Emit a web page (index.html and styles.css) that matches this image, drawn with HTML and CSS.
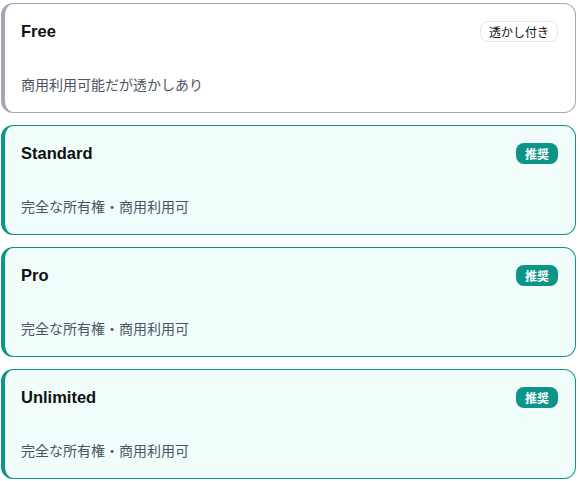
FILE: index.html
```html
<!DOCTYPE html>
<html lang="ja">
<head>
<meta charset="utf-8">
<link rel="stylesheet" href="styles.css">
</head>
<body>
<div class="list">
  <div class="card card-free">
    <div class="head">
      <span class="title">Free</span>
      <span class="badge badge-outline">透かし付き</span>
    </div>
    <p class="desc">商用利用可能だが透かしあり</p>
  </div>
  <div class="card card-paid">
    <div class="head">
      <span class="title">Standard</span>
      <span class="badge badge-teal">推奨</span>
    </div>
    <p class="desc">完全な所有権・商用利用可</p>
  </div>
  <div class="card card-paid">
    <div class="head">
      <span class="title">Pro</span>
      <span class="badge badge-teal">推奨</span>
    </div>
    <p class="desc">完全な所有権・商用利用可</p>
  </div>
  <div class="card card-paid">
    <div class="head">
      <span class="title">Unlimited</span>
      <span class="badge badge-teal">推奨</span>
    </div>
    <p class="desc">完全な所有権・商用利用可</p>
  </div>
</div>
</body>
</html>
```
FILE: styles.css
```css
html, body {
  margin: 0;
  background: #ffffff;
}
body {
  padding: 3px 4px 0 1px;
  font-family: "Liberation Sans", "Noto Sans CJK JP", sans-serif;
}
.list {
  display: flex;
  flex-direction: column;
  gap: 12px;
}
.card {
  height: 110px;
  box-sizing: border-box;
  border: 1px solid;
  border-left-width: 4px;
  border-radius: 12px;
  padding: 15px 17px 18px 16px;
  display: flex;
  flex-direction: column;
  justify-content: space-between;
}
.card-free {
  background: #ffffff;
  border-color: #a3a7b3;
}
.card-paid {
  background: #f0fdfa;
  border-color: #0f9488;
}
.head {
  display: flex;
  align-items: center;
  justify-content: space-between;
  height: 24px;
}
.title {
  font-weight: 700;
  font-size: 16.5px;
  color: #111111;
}
.badge {
  font-family: "Noto Sans CJK JP", sans-serif;
  font-size: 12px;
  line-height: 19px;
  padding: 0 8px;
  border-radius: 8px;
}
.badge-outline {
  background: #ffffff;
  border: 1px solid #e5e7eb;
  color: #111111;
}
.badge-teal {
  background: #0d9488;
  color: #ffffff;
  font-weight: 700;
  line-height: 21px;
  padding: 0 9px;
}
.desc {
  margin: 0;
  font-family: "Noto Sans CJK JP", sans-serif;
  font-size: 14px;
  line-height: 20px;
  color: #4b5563;
}
```
